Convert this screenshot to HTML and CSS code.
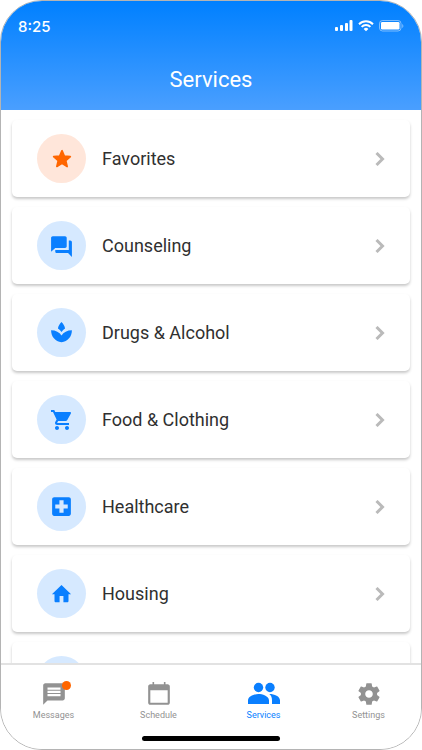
FILE: index.html
```html
<!DOCTYPE html>
<html lang="en">
<head>
    <meta charset="UTF-8">
    <meta name="viewport" content="width=device-width, initial-scale=1.0">
    <title>Services</title>
    <link rel="stylesheet" href="styles.css">
</head>
<body>

<div class="phone">
    <header class="header">
        <div class="status-bar">
            <span class="time">8:25</span>
            <div class="status-icons">
                <svg width="18" height="12" viewBox="0 0 18 12" fill="#fff">
                    <rect x="0" y="7" width="3" height="4" rx="1"/>
                    <rect x="5" y="5" width="3" height="6" rx="1"/>
                    <rect x="10" y="3" width="3" height="8" rx="1"/>
                    <rect x="14.5" y="0" width="3" height="11" rx="1"/>
                </svg>
                <svg width="16" height="12" viewBox="0 0 16 12" fill="none" stroke="#fff" stroke-width="2">
                    <path d="M1 4.2a10 10 0 0 1 14 0"/>
                    <path d="M3.6 6.9a6.3 6.3 0 0 1 8.8 0"/>
                    <path d="M8 11.3 5.6 8.9a3.4 3.4 0 0 1 4.8 0z" fill="#fff" stroke="none"/>
                </svg>
                <svg width="25" height="12" viewBox="0 0 25 12">
                    <rect x="0.5" y="0.5" width="21.5" height="10.5" rx="3" fill="none" stroke="#fff" stroke-opacity="0.45"/>
                    <rect x="2" y="2" width="18.5" height="7.5" rx="1.3" fill="#fff"/>
                    <path d="M23.3 4v4c1.4-.6 1.4-3.4 0-4z" fill="#fff" fill-opacity="0.5"/>
                </svg>
            </div>
        </div>
        <h1>Services</h1>
    </header>

    <main class="services">
        <a class="card" href="#favorites">
            <span class="icon favorite">
                <svg width="20" height="20" viewBox="0 0 24 24"><path d="M12 17.27 18.18 21l-1.64-7.03L22 9.24l-7.19-.61L12 2 9.19 8.63 2 9.24l5.46 4.73L5.82 21z"/></svg>
            </span>
            <span class="name">Favorites</span>
            <svg class="chevron" width="10" height="14" viewBox="0 0 10 14"><path d="M1.5 1 7.5 7l-6 6"/></svg>
        </a>
        <a class="card" href="#counseling">
            <span class="icon">
                <svg width="25" height="25" viewBox="0 0 24 24"><path d="M3.600 3h11.800c.9 0 1.600.7 1.600 1.600v8.100c0 .9-.7 1.600-1.600 1.600H6L2 18V4.600C2 3.700 2.700 3 3.600 3z"/><path d="M19 7.300h1.400c.9 0 1.600.7 1.600 1.600V23l-3.700-3.700H7.600c-.9 0-1.600-.7-1.600-1.600v-1.400h13z"/></svg>
            </span>
            <span class="name">Counseling</span>
            <svg class="chevron" width="10" height="14" viewBox="0 0 10 14"><path d="M1.5 1 7.5 7l-6 6"/></svg>
        </a>
        <a class="card" href="#drugs-alcohol">
            <span class="icon">
                <svg width="25" height="25" viewBox="0 0 24 24"><path d="M12 1.800c-1.900 2-3.200 4-3.400 6.300 1.300.8 2.500 1.900 3.400 3.400.9-1.500 2.100-2.600 3.400-3.400-.2-2.300-1.500-4.300-3.400-6.300z"/><path d="M12 14.800C10 11.800 6.500 9.800 2 9.800c0 6.200 4 10.600 10 11.600 6-1 10-5.400 10-11.600-4.500 0-8 2-10 5z"/></svg>
            </span>
            <span class="name">Drugs &amp; Alcohol</span>
            <svg class="chevron" width="10" height="14" viewBox="0 0 10 14"><path d="M1.5 1 7.5 7l-6 6"/></svg>
        </a>
        <a class="card" href="#food-clothing">
            <span class="icon">
                <svg width="24" height="24" viewBox="0 0 24 24"><path d="M7 18c-1.1 0-1.99.9-1.99 2S5.900 22 7 22s2-.9 2-2-.9-2-2-2zM1 2v2h2l3.600 7.590-1.350 2.450c-.16.28-.25.61-.25.96 0 1.100.9 2 2 2h12v-2H7.420c-.14 0-.25-.11-.25-.25l.03-.12.9-1.630h7.450c.75 0 1.410-.41 1.750-1.030l3.580-6.490c.08-.14.12-.31.12-.48 0-.55-.45-1-1-1H5.210l-.94-2H1zm16 16c-1.100 0-1.990.9-1.990 2s.89 2 1.990 2 2-.9 2-2-.9-2-2-2z"/></svg>
            </span>
            <span class="name">Food &amp; Clothing</span>
            <svg class="chevron" width="10" height="14" viewBox="0 0 10 14"><path d="M1.5 1 7.5 7l-6 6"/></svg>
        </a>
        <a class="card" href="#healthcare">
            <span class="icon">
                <svg width="25" height="25" viewBox="0 0 24 24"><path d="M19 3H5c-1.1 0-1.99.9-1.99 2L3 19c0 1.1.9 2 2 2h14c1.1 0 2-.9 2-2V5c0-1.1-.9-2-2-2zm-1 11h-4v4h-4v-4H6v-4h4V6h4v4h4v4z"/></svg>
            </span>
            <span class="name">Healthcare</span>
            <svg class="chevron" width="10" height="14" viewBox="0 0 10 14"><path d="M1.5 1 7.5 7l-6 6"/></svg>
        </a>
        <a class="card" href="#housing">
            <span class="icon">
                <svg width="23" height="23" viewBox="0 0 24 24"><path d="M10 21v-6.500h4V21h4.500c.5 0 .8-.3.8-.8v-7.400H22L12 3 2 12.800h2.700v7.400c0 .5.3.8.8.8z"/></svg>
            </span>
            <span class="name">Housing</span>
            <svg class="chevron" width="10" height="14" viewBox="0 0 10 14"><path d="M1.5 1 7.5 7l-6 6"/></svg>
        </a>
        <div class="card">
            <span class="icon"></span>
        </div>
    </main>

    <footer class="footer">
        <nav class="tabs">
            <a class="tab" href="#messages">
                <span class="tab-icon">
                    <svg width="26" height="26" viewBox="0 0 24 24"><path d="M20 2H4c-1.1 0-1.99.9-1.99 2L2 22l4-4h14c1.1 0 2-.9 2-2V4c0-1.1-.9-2-2-2zm-2 12H6v-2h12v2zm0-3H6V9h12v2zm0-3H6V6h12v2z"/></svg>
                    <span class="badge"></span>
                </span>
                Messages
            </a>
            <a class="tab" href="#schedule">
                <span class="tab-icon">
                    <svg width="26" height="26" viewBox="0 0 24 24"><path d="M20 3h-2V1h-1.500v2h-9V1H6v2H4c-1.100 0-2 .9-2 2v15c0 1.100.9 2 2 2h16c1.100 0 2-.9 2-2V5c0-1.100-.9-2-2-2zm0 17H4V8.500h16V20z"/></svg>
                </span>
                Schedule
            </a>
            <a class="tab active" href="#services">
                <span class="tab-icon">
                    <svg width="34" height="26" viewBox="0 0 34 26"><circle cx="11.5" cy="6.5" r="4.7"/><circle cx="23" cy="6.5" r="4.7"/><path d="M1 19.5c0-4.7 7-6.500 10.500-6.500S22 14.800 22 19.500V23H1zM22.300 13.100c2 1.500 2.700 3.700 2.700 6.400V23h8v-3.500c0-4-5.500-6.400-10.700-6.400z"/></svg>
                </span>
                Services
            </a>
            <a class="tab" href="#settings">
                <span class="tab-icon">
                    <svg width="26" height="26" viewBox="0 0 24 24"><path d="M19.430 12.980c.04-.32.07-.64.07-.98s-.03-.66-.07-.98l2.110-1.650c.19-.15.24-.42.12-.64l-2-3.460c-.12-.22-.39-.3-.61-.22l-2.490 1c-.52-.4-1.080-.73-1.690-.98l-.38-2.650C14.460 2.180 14.250 2 14 2h-4c-.25 0-.46.18-.49.42l-.38 2.650c-.61.25-1.170.59-1.690.98l-2.490-1c-.23-.09-.49 0-.61.22l-2 3.460c-.13.22-.07.49.12.64l2.110 1.650c-.04.32-.07.65-.07.98s.03.66.07.98l-2.110 1.650c-.19.15-.24.42-.12.64l2 3.460c.12.22.39.3.61.22l2.490-1c.52.4 1.080.73 1.690.98l.38 2.650c.03.24.24.42.49.42h4c.25 0 .46-.18.49-.42l.38-2.650c.61-.25 1.170-.59 1.690-.98l2.490 1c.23.09.49 0 .61-.22l2-3.460c.12-.22.07-.49-.12-.64l-2.110-1.650zM12 15.500c-1.930 0-3.500-1.570-3.500-3.500s1.570-3.500 3.500-3.500 3.500 1.570 3.500 3.500-1.570 3.500-3.500 3.500z"/></svg>
                </span>
                Settings
            </a>
        </nav>
        <div class="home-indicator"></div>
    </footer>
</div>

</body>
</html>
```

FILE: styles.css
```css
* {
    box-sizing: border-box;
}
body {
    font-family: Roboto, sans-serif;
    margin: 0;
    background-color: #fff;
}
a {
    color: inherit;
    text-decoration: none;
}
.phone {
    display: flex;
    flex-direction: column;
    height: 100vh;
    border: 1px solid #b4b4b4;
    border-radius: 42px;
    background-color: #fff;
    overflow: hidden;
}
.header {
    padding: 15px 17px 16px;
    background: linear-gradient(#0080ff, #4a9fff);
    color: #fff;
}
.status-bar {
    display: flex;
    justify-content: space-between;
    align-items: center;
    height: 20px;
}
.time {
    font-family: Inter, sans-serif;
    font-size: 15px;
    font-weight: 500;
}
.status-icons {
    display: flex;
    gap: 5px;
}
.header h1 {
    margin: 30px 0 0;
    font-size: 22px;
    font-weight: 400;
    line-height: 28px;
    text-align: center;
}
.services {
    display: flex;
    flex: 1;
    flex-direction: column;
    gap: 10px;
    min-height: 0;
    padding: 10px 11px;
    overflow: hidden;
}
.card {
    display: flex;
    flex-shrink: 0;
    align-items: center;
    gap: 16px;
    padding: 14px 25px;
    border-radius: 5px;
    background-color: #fff;
    box-shadow: 0 2px 3px rgba(0, 0, 0, 0.22);
}
.icon {
    display: flex;
    justify-content: center;
    align-items: center;
    width: 49px;
    height: 49px;
    border-radius: 50%;
    background-color: #d6e9ff;
    fill: #0a7fff;
}
.icon.favorite {
    background-color: #ffe6da;
    fill: #ff6600;
    stroke: #ff6600;
    stroke-width: 2;
    stroke-linejoin: round;
}
.name {
    flex: 1;
    color: #303030;
    font-size: 18px;
}
.chevron {
    fill: none;
    stroke: #bababa;
    stroke-width: 3;
}
.footer {
    border-top: 2px solid #e2e2e2;
    padding-bottom: 8px;
    background-color: #fff;
}
.tabs {
    display: grid;
    grid-template-columns: repeat(4, 1fr);
    padding: 16px 0 15px;
}
.tab {
    display: flex;
    flex-direction: column;
    align-items: center;
    gap: 2px;
    color: #929292;
    fill: #929292;
    font-size: 9px;
    line-height: 12px;
}
.tab.active {
    color: #0a7fff;
    fill: #0a7fff;
}
.tab-icon {
    position: relative;
    height: 26px;
}
.badge {
    position: absolute;
    top: 0;
    right: -4px;
    width: 9px;
    height: 9px;
    border-radius: 50%;
    background-color: #ff6600;
}
.home-indicator {
    width: 33%;
    height: 5px;
    margin: 0 auto;
    border-radius: 3px;
    background-color: #000;
}
```
